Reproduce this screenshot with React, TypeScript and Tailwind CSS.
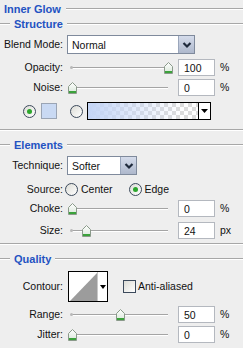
import React from "react";

const Line = ({ className = "" }: { className?: string }) => (
  <div className={`h-[2px] border-t border-[#a7a7a7] border-b border-b-white ${className}`} />
);

const Legend = ({ text }: { text: string }) => (
  <div className="flex items-center h-[12px]">
    <Line className="w-[10px]" />
    <span className="ml-[4px] font-bold text-[11px] text-[#2352c2]">{text}</span>
    <Line className="flex-1 ml-[4px]" />
  </div>
);

const Chevron = () => (
  <svg width="10" height="8" viewBox="0 0 10 8">
    <path d="M1.5 2 L5 5.5 L8.5 2" fill="none" stroke="#1f2a3c" strokeWidth="2.2" />
  </svg>
);

const Dropdown = ({ value, width }: { value: string; width: number }) => (
  <div
    className="flex h-[19px] border border-[#7f8a9c] bg-white"
    style={{ width }}
  >
    <div className="flex-1 flex items-center pl-[4px] pt-[1px]">{value}</div>
    <div className="w-[16px] border-l border-[#9aa6bb] bg-gradient-to-b from-[#d5dceb] to-[#aeb8cc] flex items-center justify-center">
      <Chevron />
    </div>
  </div>
);

const Thumb = () => (
  <svg width="9" height="12" viewBox="0 0 9 12">
    <defs>
      <linearGradient id="tg" x1="0" y1="0" x2="0" y2="1">
        <stop offset="0" stopColor="#ffffff" />
        <stop offset="1" stopColor="#d8e6d8" />
      </linearGradient>
    </defs>
    <path d="M0.5 4.5 L4.5 0.5 L8.5 4.5 V11.5 H0.5 Z" fill="url(#tg)" stroke="#8a9a8a" />
    <rect x="1" y="9" width="7" height="2" fill="#3ba23b" />
  </svg>
);

const Slider = ({ pos }: { pos: number }) => (
  <div className="relative w-[105px] h-[14px]">
    <div className="absolute left-[3px] right-[5px] top-[6px] h-[2px] border-t border-[#a4a4a4] border-b border-b-white" />
    <div className="absolute left-[2px] top-[5px] w-[3px] h-[3px] rounded-full bg-[#b8b8b8]" />
    <div className="absolute top-[1px]" style={{ left: pos }}>
      <Thumb />
    </div>
  </div>
);

const NumInput = ({ value }: { value: string }) => (
  <div className="w-[37px] h-[17px] border border-[#b4b8bf] bg-white flex items-center pl-[5px] pt-[1px]">
    {value}
  </div>
);

const SliderRow = ({
  label,
  pos,
  value,
  unit,
  className = "",
}: {
  label: string;
  pos: number;
  value: string;
  unit: string;
  className?: string;
}) => (
  <div className={`flex items-center ${className}`}>
    <div className="w-[63px] text-right">{label}</div>
    <div className="ml-[5px]">
      <Slider pos={pos} />
    </div>
    <div className="ml-[5px]">
      <NumInput value={value} />
    </div>
    <span className="ml-[5px]">{unit}</span>
  </div>
);

const Radio = ({ checked }: { checked?: boolean }) => (
  <div className="w-[13px] h-[13px] rounded-full border border-[#3c4a5c] bg-gradient-to-br from-[#dcdcd6] to-white flex items-center justify-center">
    {checked && <div className="w-[5px] h-[5px] rounded-full bg-[#2ca62c]" />}
  </div>
);

export default function App() {
  return (
    <div className="w-[243px] h-[348px] bg-[#eeeeee] overflow-hidden text-[10.5px] leading-none text-[#111] font-['Liberation_Sans',sans-serif]">
      {/* Title */}
      <div className="flex items-center h-[18px]">
        <span className="ml-[4px] font-bold text-[11px] text-[#2352c2]">Inner Glow</span>
        <Line className="flex-1 ml-[5px]" />
      </div>

      <Legend text="Structure" />

      <div className="flex items-center mt-[5px]">
        <div className="w-[63px] text-right">Blend Mode:</div>
        <div className="ml-[4px]">
          <Dropdown value="Normal" width={128} />
        </div>
      </div>

      <SliderRow label="Opacity:" pos={96} value="100" unit="%" className="mt-[5px]" />
      <SliderRow label="Noise:" pos={0} value="0" unit="%" className="mt-[3px]" />

      <div className="flex items-center mt-[6px] pl-[23px]">
        <Radio checked />
        <div className="ml-[5px] w-[16px] h-[16px] border border-[#9aa4b4] bg-[#c9d9f3]" />
        <div className="ml-[13px]">
          <Radio />
        </div>
        <div className="ml-[4px] w-[124px] h-[18px] border border-black flex">
          <div className="flex-1 bg-[linear-gradient(to_right,#c4d5f6,rgba(255,255,255,0)_85%),conic-gradient(#dcdcdc_25%,#ffffff_0_50%,#dcdcdc_0_75%,#ffffff_0)] bg-[length:100%_100%,8px_8px]" />
          <div className="w-[12px] border-l border-black bg-white flex items-center justify-center">
            <svg width="7" height="4" viewBox="0 0 7 4">
              <path d="M0 0 H7 L3.5 4 Z" fill="#000" />
            </svg>
          </div>
        </div>
      </div>

      <Line className="w-full mt-[9px]" />

      <div className="mt-[8px]">
        <Legend text="Elements" />
      </div>

      <div className="flex items-center mt-[5px]">
        <div className="w-[63px] text-right">Technique:</div>
        <div className="ml-[4px]">
          <Dropdown value="Softer" width={70} />
        </div>
      </div>

      <div className="flex items-center mt-[7px] h-[14px]">
        <div className="w-[63px] text-right">Source:</div>
        <div className="ml-[2px]">
          <Radio />
        </div>
        <span className="ml-[3px]">Center</span>
        <div className="ml-[16px]">
          <Radio checked />
        </div>
        <span className="ml-[3px]">Edge</span>
      </div>

      <SliderRow label="Choke:" pos={0} value="0" unit="%" className="mt-[4px]" />
      <SliderRow label="Size:" pos={14} value="24" unit="px" className="mt-[5px]" />

      <Line className="w-full mt-[4px]" />

      <div className="mt-[8px]">
        <Legend text="Quality" />
      </div>

      <div className="flex items-center mt-[6px]">
        <div className="w-[63px] text-right">Contour:</div>
        <div className="ml-[5px] w-[40px] h-[31px] border border-black bg-white flex">
          <div className="w-[29px] h-full border-r border-[#c8c8c8]">
            <svg width="28" height="29" viewBox="0 0 28 29">
              <path d="M1 29 L28 1 V29 Z" fill="#9c9c9c" />
            </svg>
          </div>
          <div className="flex-1 flex items-center justify-center">
            <svg width="6" height="4" viewBox="0 0 6 4">
              <path d="M0 0 H6 L3 4 Z" fill="#000" />
            </svg>
          </div>
        </div>
        <div className="ml-[15px] w-[13px] h-[13px] border border-[#3c4a5c] bg-gradient-to-br from-[#dcdcd6] to-white" />
        <span className="ml-[2px]">Anti-aliased</span>
      </div>

      <SliderRow label="Range:" pos={48} value="50" unit="%" className="mt-[4px]" />
      <SliderRow label="Jitter:" pos={0} value="0" unit="%" className="mt-[3px]" />
    </div>
  );
}
